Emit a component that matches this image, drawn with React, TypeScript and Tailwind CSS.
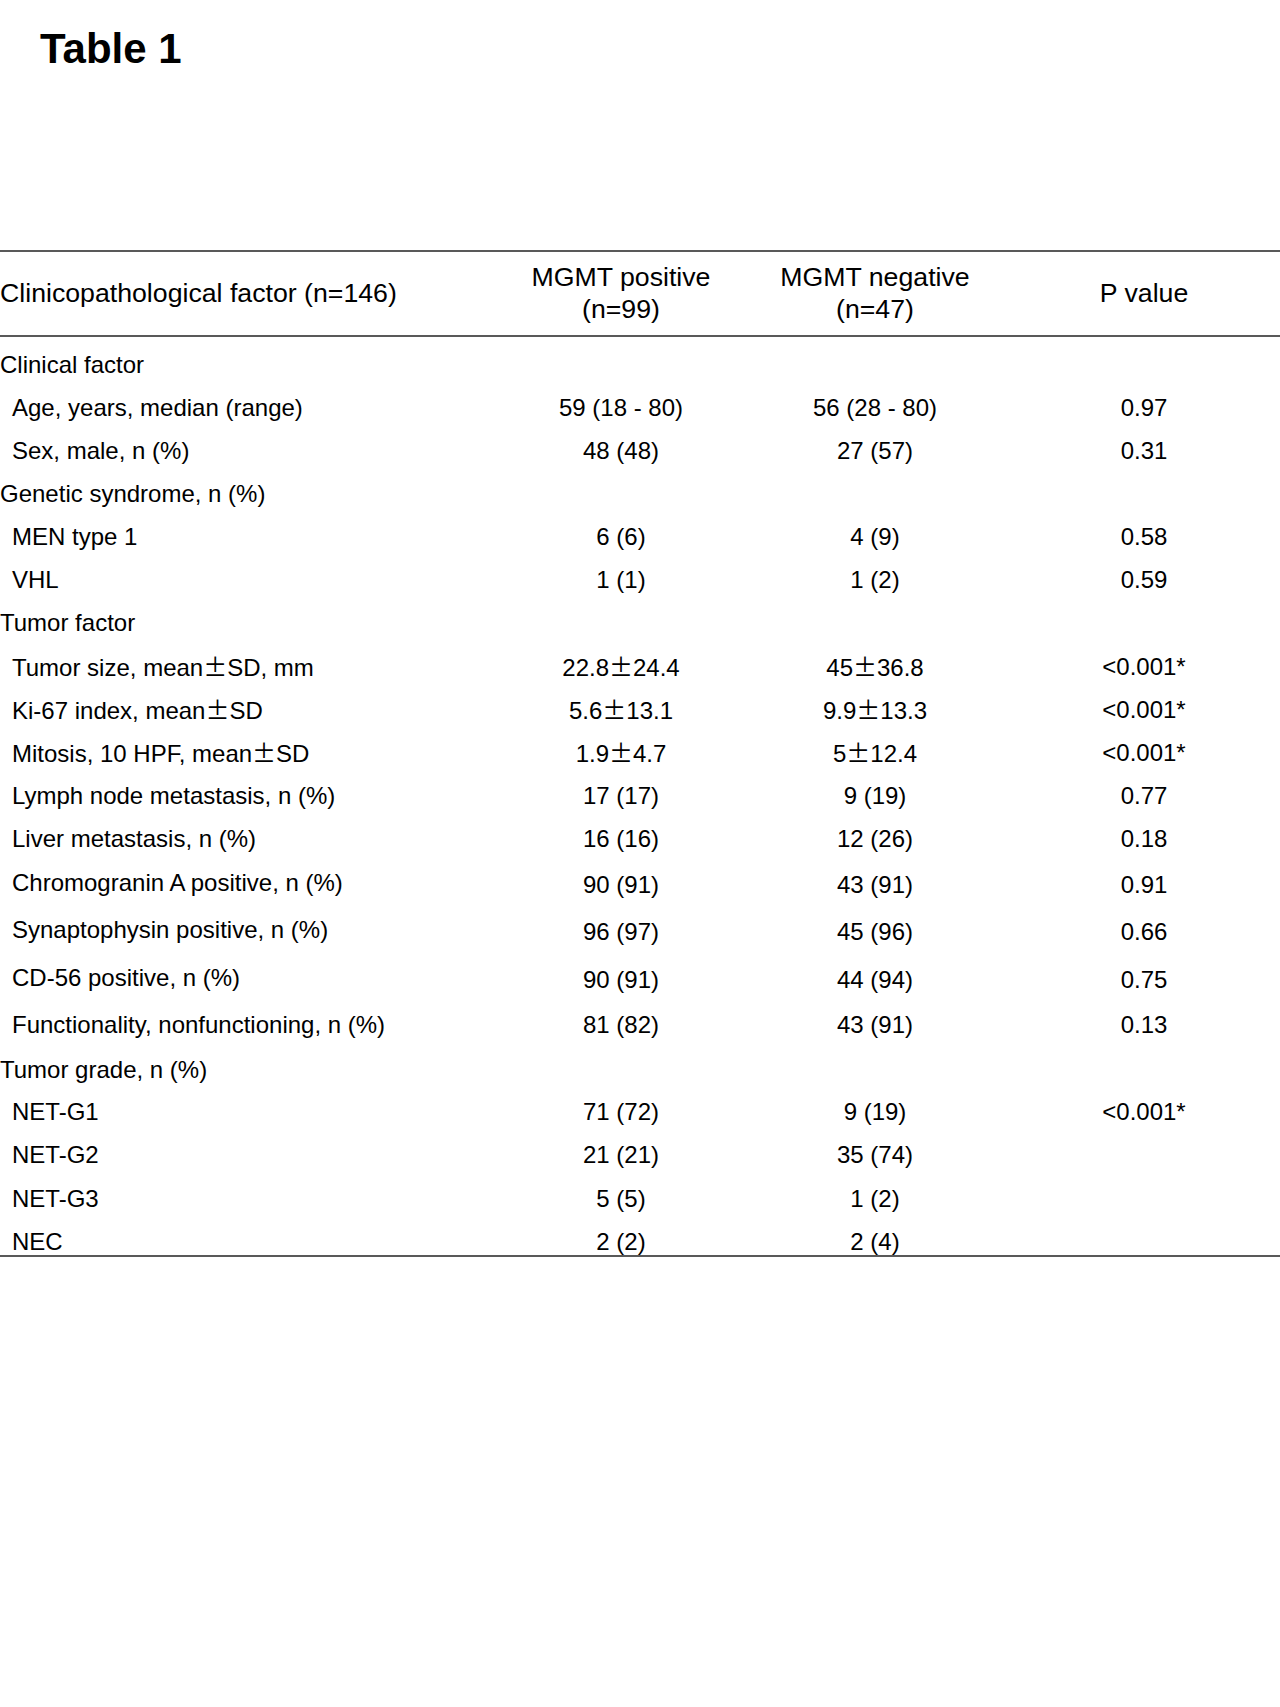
type Row = {
  label: string
  group?: boolean
  pos?: string
  neg?: string
  p?: string
  h: string
  low?: boolean
}

const rows: Row[] = [
  { label: 'Clinical factor', group: true, h: 'h-[43px]' },
  { label: 'Age, years, median (range)', pos: '59 (18 - 80)', neg: '56 (28 - 80)', p: '0.97', h: 'h-[43px]' },
  { label: 'Sex, male, n (%)', pos: '48 (48)', neg: '27 (57)', p: '0.31', h: 'h-[43px]' },
  { label: 'Genetic syndrome, n (%)', group: true, h: 'h-[43px]' },
  { label: 'MEN type 1', pos: '6 (6)', neg: '4 (9)', p: '0.58', h: 'h-[43px]' },
  { label: 'VHL', pos: '1 (1)', neg: '1 (2)', p: '0.59', h: 'h-[43px]' },
  { label: 'Tumor factor', group: true, h: 'h-[44px]' },
  { label: 'Tumor size, mean±SD, mm', pos: '22.8±24.4', neg: '45±36.8', p: '<0.001*', h: 'h-[43px]' },
  { label: 'Ki-67 index, mean±SD', pos: '5.6±13.1', neg: '9.9±13.3', p: '<0.001*', h: 'h-[43px]' },
  { label: 'Mitosis, 10 HPF, mean±SD', pos: '1.9±4.7', neg: '5±12.4', p: '<0.001*', h: 'h-[43px]' },
  { label: 'Lymph node metastasis, n (%)', pos: '17 (17)', neg: '9 (19)', p: '0.77', h: 'h-[44px]' },
  { label: 'Liver metastasis, n (%)', pos: '16 (16)', neg: '12 (26)', p: '0.18', h: 'h-[42px]' },
  { label: 'Chromogranin A positive, n (%)', pos: '90 (91)', neg: '43 (91)', p: '0.91', h: 'h-[46px]', low: true },
  { label: 'Synaptophysin positive, n (%)', pos: '96 (97)', neg: '45 (96)', p: '0.66', h: 'h-[48px]', low: true },
  { label: 'CD-56 positive, n (%)', pos: '90 (91)', neg: '44 (94)', p: '0.75', h: 'h-[47px]', low: true },
  { label: 'Functionality, nonfunctioning, n (%)', pos: '81 (82)', neg: '43 (91)', p: '0.13', h: 'h-[47px]' },
  { label: 'Tumor grade, n (%)', group: true, h: 'h-[43px]' },
  { label: 'NET-G1', pos: '71 (72)', neg: '9 (19)', p: '<0.001*', h: 'h-[42px]' },
  { label: 'NET-G2', pos: '21 (21)', neg: '35 (74)', h: 'h-[44px]' },
  { label: 'NET-G3', pos: '5 (5)', neg: '1 (2)', h: 'h-[43px]' },
]

const last: Row = { label: 'NEC', pos: '2 (2)', neg: '2 (4)', h: 'h-[35px]' }

// the ± in the source table is a wide (full-width) glyph
const withPm = (text?: string) => {
  if (!text) return null
  const parts = text.split('±')
  return parts.map((part, i) => (
    <span key={i}>
      {part}
      {i < parts.length - 1 && (
        <span className="inline-block w-[1em] text-center font-['Noto_Sans_CJK_JP',sans-serif] [font-feature-settings:'fwid']">
          ±
        </span>
      )}
    </span>
  ))
}

const TableRow = ({ row, end }: { row: Row; end?: boolean }) => {
  const align = end ? 'items-start pt-[8px]' : 'items-center'
  const shift = row.low ? 'pt-[4px]' : ''
  return (
    <div className={`grid grid-cols-[500px_242px_266px_1fr] ${align} ${row.h}`}>
      <div className={row.group ? 'pl-0' : 'pl-[12px]'}>{withPm(row.label)}</div>
      <div className={`text-center ${shift}`}>{withPm(row.pos)}</div>
      <div className={`text-center ${shift}`}>{withPm(row.neg)}</div>
      <div className={`text-center ${shift}`}>{row.p}</div>
    </div>
  )
}

const App = () => {
  return (
    <div className="min-h-[1707px] w-[1280px] bg-white text-black font-['Liberation_Sans',Arial,sans-serif]">
      <h1 className="pl-[40px] pt-[28px] text-[42px] leading-[42px] font-bold">Table 1</h1>

      <div className="mt-[180px]">
        <div className="grid grid-cols-[500px_242px_266px_1fr] items-center h-[87px] border-y-2 border-[#595959] text-[26.7px] leading-[31.5px]">
          <div>Clinicopathological factor (n=146)</div>
          <div className="text-center">
            MGMT positive
            <br />
            (n=99)
          </div>
          <div className="text-center">
            MGMT negative
            <br />
            (n=47)
          </div>
          <div className="text-center">P value</div>
        </div>

        <div className="pt-[6px] text-[24px] leading-[28px] border-b-2 border-[#595959]">
          {rows.map((row) => (
            <TableRow key={row.label} row={row} />
          ))}
          <TableRow row={last} end />
        </div>
      </div>
    </div>
  )
}

export default App
